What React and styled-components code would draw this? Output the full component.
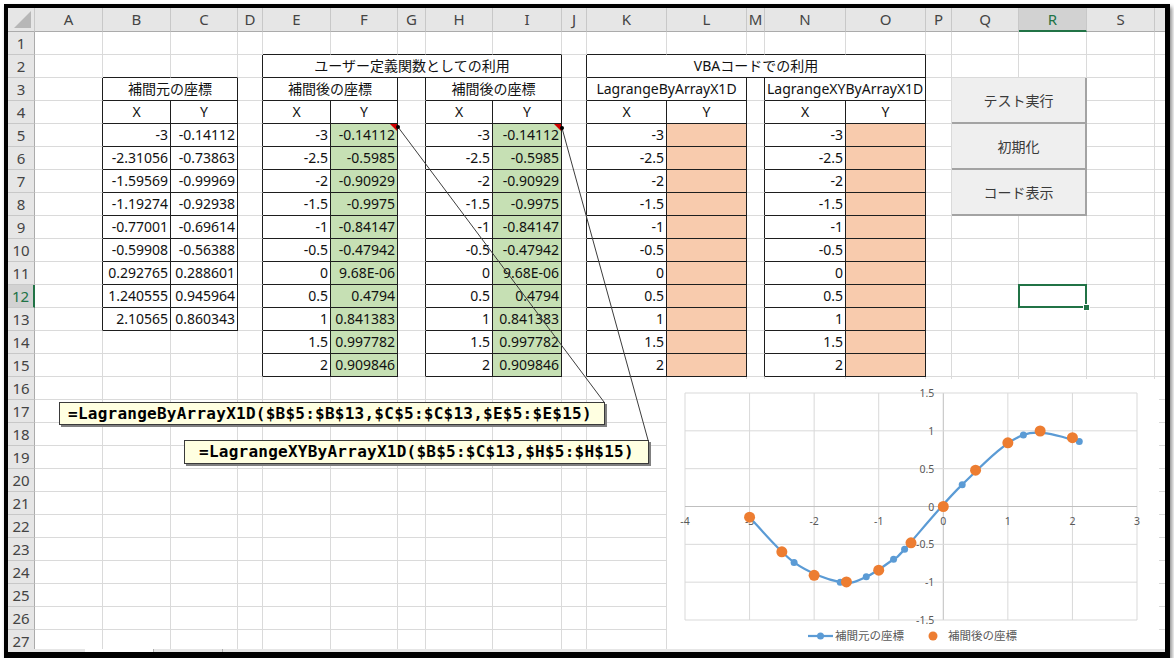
import styled, { createGlobalStyle } from 'styled-components';

const GlobalStyle = createGlobalStyle`
  html, body {
    margin: 0;
    padding: 0;
    background: #fff;
  }
  body {
    font-family: "Noto Sans", "Noto Sans CJK JP", sans-serif;
  }
`;

// column T is only a sliver at the right edge, its letter is out of view
const COLS = [
  ['A', 68], ['B', 68], ['C', 67], ['D', 25], ['E', 68], ['F', 67], ['G', 28],
  ['H', 67], ['I', 69], ['J', 25], ['K', 80], ['L', 80], ['M', 18], ['N', 81],
  ['O', 80], ['P', 26], ['Q', 67], ['R', 68], ['S', 68], ['', 68],
];
const ROWS = 27;
const SEL = { row: 12, col: 17 };

const FILLS = { green: '#c6e0b4', orange: '#f8cbad' };

// bordered table regions: [rowFrom, rowTo, colFrom, colTo]
const BOXES = [
  [3, 13, 1, 2],
  [2, 2, 4, 8],
  [3, 15, 4, 5],
  [3, 15, 7, 8],
  [2, 2, 10, 14],
  [3, 15, 10, 11],
  [3, 15, 13, 14],
];
const boxed = (r, c) =>
  BOXES.some(([r1, r2, c1, c2]) => r >= r1 && r <= r2 && c >= c1 && c <= c2);

const SRC = [
  ['-3', '-0.14112'], ['-2.31056', '-0.73863'], ['-1.59569', '-0.99969'],
  ['-1.19274', '-0.92938'], ['-0.77001', '-0.69614'], ['-0.59908', '-0.56388'],
  ['0.292765', '0.288601'], ['1.240555', '0.945964'], ['2.10565', '0.860343'],
];
const OUT = [
  ['-3', '-0.14112'], ['-2.5', '-0.5985'], ['-2', '-0.90929'], ['-1.5', '-0.9975'],
  ['-1', '-0.84147'], ['-0.5', '-0.47942'], ['0', '9.68E-06'], ['0.5', '0.4794'],
  ['1', '0.841383'], ['1.5', '0.997782'], ['2', '0.909846'],
];

const cells = {};
const put = (r, c, text, extra = {}) => {
  cells[`${r}:${c}`] = { text, align: 'right', span: 1, ...extra };
};

put(2, 4, 'ユーザー定義関数としての利用', { span: 5, align: 'center' });
put(2, 10, 'VBAコードでの利用', { span: 5, align: 'center' });
put(3, 1, '補間元の座標', { span: 2, align: 'center' });
put(3, 4, '補間後の座標', { span: 2, align: 'center' });
put(3, 7, '補間後の座標', { span: 2, align: 'center' });
put(3, 10, 'LagrangeByArrayX1D', { span: 2, align: 'center' });
put(3, 13, 'LagrangeXYByArrayX1D', { span: 2, align: 'center' });
[1, 4, 7, 10, 13].forEach((c) => {
  put(4, c, 'X', { align: 'center' });
  put(4, c + 1, 'Y', { align: 'center' });
});
SRC.forEach(([x, y], i) => {
  put(5 + i, 1, x);
  put(5 + i, 2, y);
});
OUT.forEach(([x, y], i) => {
  const comment = i === 0;
  put(5 + i, 4, x);
  put(5 + i, 5, y, { fill: 'green', comment });
  put(5 + i, 7, x);
  put(5 + i, 8, y, { fill: 'green', comment });
  put(5 + i, 10, x);
  put(5 + i, 11, '', { fill: 'orange' });
  put(5 + i, 13, x);
  put(5 + i, 14, '', { fill: 'orange' });
});

const Frame = styled.div`
  margin: 4px 0 0 4px;
  width: 1157px;
  border: solid #000;
  border-width: 4px 5px 6px 4px;
  box-shadow: 2px 3px 4px rgba(0, 0, 0, 0.45);
  background: #fff;
`;

const Sheet = styled.div`
  position: relative;
  display: grid;
  grid-template-columns: 27px ${COLS.map(([, w]) => `${w}px`).join(' ')};
  grid-template-rows: 24px repeat(${ROWS}, 23px);
  height: 641px;
  overflow: hidden;
`;

const Corner = styled.div`
  position: relative;
  background: #e6e6e6;
  border-right: 1px solid #c8c8c8;
  border-bottom: 1px solid #ababab;
  box-sizing: border-box;
  &::after {
    content: '';
    position: absolute;
    right: 3px;
    bottom: 3px;
    border-style: solid;
    border-width: 0 0 17px 17px;
    border-color: transparent transparent #b7b7b7 transparent;
  }
`;

const ColHead = styled.div`
  box-sizing: border-box;
  background: ${(p) => (p.$active ? '#d2d2d2' : '#e6e6e6')};
  color: ${(p) => (p.$active ? '#217346' : '#444')};
  border-right: 1px solid #c8c8c8;
  border-bottom: ${(p) => (p.$active ? '2px solid #217346' : '1px solid #ababab')};
  font-size: 15px;
  line-height: 23px;
  text-align: center;
  overflow: hidden;
`;

const RowHead = styled.div`
  box-sizing: border-box;
  background: ${(p) => (p.$active ? '#d2d2d2' : '#e6e6e6')};
  color: ${(p) => (p.$active ? '#217346' : '#444')};
  border-right: ${(p) => (p.$active ? '2px solid #217346' : '1px solid #ababab')};
  border-bottom: 1px solid #c8c8c8;
  font-size: 15px;
  line-height: 22px;
  text-align: center;
`;

const Cell = styled.div`
  grid-column: span ${(p) => p.$span};
  position: relative;
  box-sizing: border-box;
  padding: 0 2px;
  background: ${(p) => FILLS[p.$fill] || '#fff'};
  border-right: 1px solid ${(p) => (p.$rightLine ? '#1e1e1e' : '#dadada')};
  border-bottom: 1px solid ${(p) => (p.$bottomLine ? '#1e1e1e' : '#dadada')};
  color: #111;
  font-size: 14px;
  line-height: 22px;
  text-align: ${(p) => p.$align};
  white-space: nowrap;

  ${(p) =>
    p.$comment &&
    `
    &::after {
      content: '';
      position: absolute;
      top: 0;
      right: 0;
      z-index: 1;
      border-style: solid;
      border-width: 0 7px 7px 0;
      border-color: transparent #d00000 transparent transparent;
    }
  `}

  ${(p) =>
    p.$selected &&
    `
    &::before {
      content: '';
      position: absolute;
      inset: -1px -1px -1px -1px;
      z-index: 2;
      border: 2px solid #217346;
    }
    &::after {
      content: '';
      position: absolute;
      right: -4px;
      bottom: -4px;
      z-index: 3;
      width: 5px;
      height: 5px;
      background: #217346;
      border: 1px solid #fff;
    }
  `}
`;

const Leaders = styled.svg`
  position: absolute;
  left: 0;
  top: 0;
  z-index: 4;
  pointer-events: none;
`;

const Note = styled.div`
  position: absolute;
  z-index: 5;
  box-sizing: border-box;
  background: #ffffe1;
  border: 1px solid #3a3a3a;
  box-shadow: 2px 2px 0 #808080;
  font-family: "DejaVu Sans Mono", "Noto Sans CJK JP", monospace;
  font-weight: 700;
  font-size: 16px;
  letter-spacing: 0.25px;
  color: #000;
  white-space: nowrap;
`;

const ByArrayNote = styled(Note)`
  left: 51px;
  top: 394px;
  width: 546px;
  height: 23px;
  padding-left: 8px;
  line-height: 21px;
`;

const XYNote = styled(Note)`
  left: 176px;
  top: 432px;
  width: 465px;
  height: 24px;
  padding-left: 14px;
  line-height: 22px;
`;

const ButtonStack = styled.div`
  position: absolute;
  left: 944px;
  top: 70px;
  z-index: 5;
  display: flex;
  flex-direction: column;
  width: 135px;
`;

const MacroButton = styled.button`
  height: 46px;
  box-sizing: border-box;
  background: #efefef;
  border: none;
  border-right: 2px solid #a3a3a3;
  border-bottom: 2px solid #a3a3a3;
  color: #3a3a3a;
  font-family: "Noto Sans CJK JP", sans-serif;
  font-size: 14px;
  padding: 0;
  cursor: pointer;
`;

const ChartBox = styled.div`
  position: absolute;
  left: 659px;
  top: 371px;
  z-index: 3;
  width: 492px;
  height: 280px;
  background: #fff;
`;

const TabBar = styled.div`
  height: 3px;
  display: flex;
  padding-left: 77px;
  background: #e6e6e6;
  overflow: hidden;
`;

const SheetTab = styled.div`
  width: 68px;
  background: ${(p) => (p.$active ? '#fff' : 'transparent')};
  border-right: 1px solid #b0b0b0;
  color: ${(p) => (p.$active ? '#217346' : '#444')};
  font-size: 14px;
  line-height: 18px;
  text-align: center;
`;

const PLOT = { left: 18, right: 470, top: 14, bottom: 241 };
const sx = (x) => PLOT.left + ((x + 4) * (PLOT.right - PLOT.left)) / 7;
const sy = (y) => PLOT.top + ((1.5 - y) * (PLOT.bottom - PLOT.top)) / 3;

const smoothPath = (pts) => {
  const p = pts.map(([x, y]) => [sx(x), sy(y)]);
  const f = (v) => v.map((n) => n.toFixed(2)).join(',');
  let d = `M${f(p[0])}`;
  for (let i = 0; i < p.length - 1; i++) {
    const p0 = p[i - 1] || p[i];
    const p1 = p[i];
    const p2 = p[i + 1];
    const p3 = p[i + 2] || p2;
    const c1 = [p1[0] + (p2[0] - p0[0]) / 6, p1[1] + (p2[1] - p0[1]) / 6];
    const c2 = [p2[0] - (p3[0] - p1[0]) / 6, p2[1] - (p3[1] - p1[1]) / 6];
    d += ` C${f(c1)} ${f(c2)} ${f(p2)}`;
  }
  return d;
};

function Chart() {
  const src = SRC.map(([x, y]) => [Number(x), Number(y)]);
  const out = OUT.map(([x, y]) => [Number(x), Number(y)]);
  const xs = [-4, -3, -2, -1, 0, 1, 2, 3];
  const ys = [1.5, 1, 0.5, 0, -0.5, -1, -1.5];
  const label = { fontSize: 10.5, fill: '#595959', fontFamily: '"Noto Sans", sans-serif' };
  const legend = { fontSize: 11.5, fill: '#595959', fontFamily: '"Noto Sans CJK JP", sans-serif' };

  return (
    <ChartBox>
      <svg width="492" height="280">
        {xs.map((x) => (
          <line key={`vx${x}`} x1={sx(x)} x2={sx(x)} y1={PLOT.top} y2={PLOT.bottom}
            stroke={x === 0 ? '#bfbfbf' : '#d9d9d9'} strokeWidth="1" />
        ))}
        {ys.map((y) => (
          <line key={`hy${y}`} x1={PLOT.left} x2={PLOT.right} y1={sy(y)} y2={sy(y)}
            stroke={y === 0 ? '#bfbfbf' : '#d9d9d9'} strokeWidth="1" />
        ))}
        {xs.map((x) => (
          <text key={`lx${x}`} x={sx(x)} y={sy(0) + 18} textAnchor="middle" {...label}>{x}</text>
        ))}
        {ys.map((y) => (
          <text key={`ly${y}`} x={sx(0) - 9} y={sy(y) + 4} textAnchor="end" {...label}>{y}</text>
        ))}
        <path d={smoothPath(src)} fill="none" stroke="#5b9bd5" strokeWidth="2.25" />
        {src.map(([x, y]) => (
          <circle key={`s${x}`} cx={sx(x)} cy={sy(y)} r="3.5" fill="#5b9bd5" />
        ))}
        {out.map(([x, y]) => (
          <circle key={`o${x}`} cx={sx(x)} cy={sy(y)} r="5.5" fill="#ed7d31" />
        ))}
        <line x1="141" x2="166" y1="257" y2="257" stroke="#5b9bd5" strokeWidth="2.25" />
        <circle cx="153.5" cy="257" r="3.5" fill="#5b9bd5" />
        <text x="168" y="261" {...legend}>補間元の座標</text>
        <circle cx="266" cy="257" r="4.5" fill="#ed7d31" />
        <text x="281" y="261" {...legend}>補間後の座標</text>
      </svg>
    </ChartBox>
  );
}

function SheetRow({ r }) {
  const out = [
    <RowHead key="h" $active={r === SEL.row}>{r}</RowHead>,
  ];
  let c = 0;
  while (c < COLS.length) {
    const cell = cells[`${r}:${c}`] || { text: '', align: 'left', span: 1 };
    const last = c + cell.span - 1;
    out.push(
      <Cell
        key={c}
        $span={cell.span}
        $align={cell.align}
        $fill={cell.fill}
        $comment={cell.comment}
        $selected={r === SEL.row && c === SEL.col}
        $rightLine={boxed(r, last) || boxed(r, last + 1)}
        $bottomLine={boxed(r, c) || boxed(r + 1, c)}
      >
        {cell.text}
      </Cell>
    );
    c += cell.span;
  }
  return out;
}

function App() {
  const rows = Array.from({ length: ROWS }, (_, i) => i + 1);
  return (
    <>
      <GlobalStyle />
      <Frame>
        <Sheet>
          <Corner />
          {COLS.map(([name], i) => (
            <ColHead key={i} $active={i === SEL.col}>{name}</ColHead>
          ))}
          {rows.map((r) => (
            <SheetRow key={r} r={r} />
          ))}

          <Chart />

          <Leaders width="1157" height="641">
            <line x1="390" y1="119" x2="596" y2="394" stroke="#3c3c3c" strokeWidth="1" />
            <line x1="554" y1="120" x2="640" y2="432" stroke="#3c3c3c" strokeWidth="1" />
            <circle cx="390" cy="119" r="2" fill="#000" />
            <circle cx="554" cy="120" r="2" fill="#000" />
          </Leaders>

          <ByArrayNote>=LagrangeByArrayX1D($B$5:$B$13,$C$5:$C$13,$E$5:$E$15)</ByArrayNote>
          <XYNote>=LagrangeXYByArrayX1D($B$5:$C$13,$H$5:$H$15)</XYNote>

          <ButtonStack>
            <MacroButton>テスト実行</MacroButton>
            <MacroButton>初期化</MacroButton>
            <MacroButton>コード表示</MacroButton>
          </ButtonStack>
        </Sheet>
        <TabBar>
          <SheetTab $active>Sheet1</SheetTab>
          <SheetTab>Sheet2</SheetTab>
        </TabBar>
      </Frame>
    </>
  );
}

export default App;
